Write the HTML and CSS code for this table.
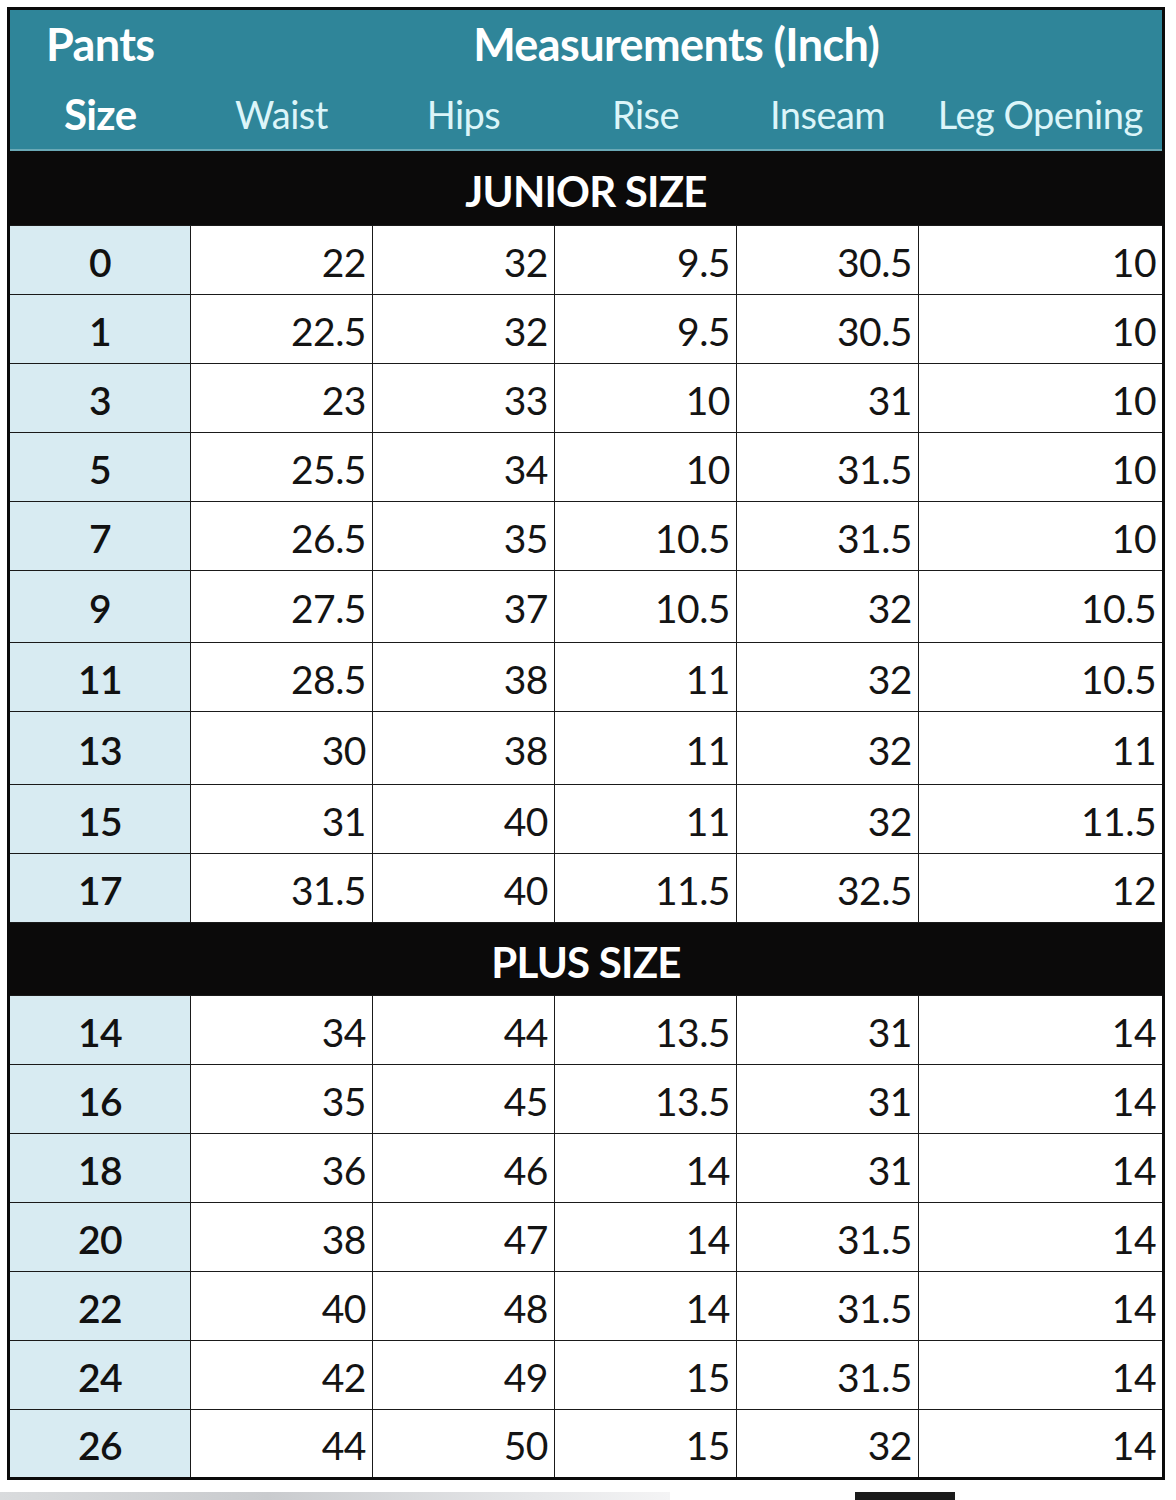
FILE: index.html
```html
<!DOCTYPE html>
<html lang="en">
<head>
<meta charset="utf-8">
<title>Pants Size Chart</title>
<link rel="stylesheet" href="styles.css">
</head>
<body>
<div class="page">
  <table class="chart">
    <colgroup>
      <col class="c-size"><col class="c-m"><col class="c-m"><col class="c-m"><col class="c-m"><col class="c-leg">
    </colgroup>
    <thead>
      <tr class="h1">
        <th class="h-main">Pants</th>
        <th class="h-main" colspan="5">Measurements (Inch)</th>
      </tr>
      <tr class="h2">
        <th class="h-main">Size</th>
        <th class="h-sub">Waist</th>
        <th class="h-sub">Hips</th>
        <th class="h-sub">Rise</th>
        <th class="h-sub">Inseam</th>
        <th class="h-sub">Leg Opening</th>
      </tr>
    </thead>
    <tbody>
      <tr class="band band-junior"><td colspan="6">JUNIOR SIZE</td></tr>
      <tr><td class="sz">0</td><td>22</td><td>32</td><td>9.5</td><td>30.5</td><td>10</td></tr>
      <tr><td class="sz">1</td><td>22.5</td><td>32</td><td>9.5</td><td>30.5</td><td>10</td></tr>
      <tr><td class="sz">3</td><td>23</td><td>33</td><td>10</td><td>31</td><td>10</td></tr>
      <tr><td class="sz">5</td><td>25.5</td><td>34</td><td>10</td><td>31.5</td><td>10</td></tr>
      <tr><td class="sz">7</td><td>26.5</td><td>35</td><td>10.5</td><td>31.5</td><td>10</td></tr>
      <tr class="tall"><td class="sz">9</td><td>27.5</td><td>37</td><td>10.5</td><td>32</td><td>10.5</td></tr>
      <tr><td class="sz">11</td><td>28.5</td><td>38</td><td>11</td><td>32</td><td>10.5</td></tr>
      <tr class="taller"><td class="sz">13</td><td>30</td><td>38</td><td>11</td><td>32</td><td>11</td></tr>
      <tr><td class="sz">15</td><td>31</td><td>40</td><td>11</td><td>32</td><td>11.5</td></tr>
      <tr><td class="sz">17</td><td>31.5</td><td>40</td><td>11.5</td><td>32.5</td><td>12</td></tr>
      <tr class="band band-plus"><td colspan="6">PLUS SIZE</td></tr>
      <tr><td class="sz">14</td><td>34</td><td>44</td><td>13.5</td><td>31</td><td>14</td></tr>
      <tr><td class="sz">16</td><td>35</td><td>45</td><td>13.5</td><td>31</td><td>14</td></tr>
      <tr><td class="sz">18</td><td>36</td><td>46</td><td>14</td><td>31</td><td>14</td></tr>
      <tr><td class="sz">20</td><td>38</td><td>47</td><td>14</td><td>31.5</td><td>14</td></tr>
      <tr><td class="sz">22</td><td>40</td><td>48</td><td>14</td><td>31.5</td><td>14</td></tr>
      <tr><td class="sz">24</td><td>42</td><td>49</td><td>15</td><td>31.5</td><td>14</td></tr>
      <tr class="last"><td class="sz">26</td><td>44</td><td>50</td><td>15</td><td>32</td><td>14</td></tr>
    </tbody>
  </table>
  <div class="photo-strip">
    <div class="strip-grey"></div>
    <div class="strip-dark"></div>
  </div>
</div>
</body>
</html>
```

FILE: styles.css
```css
html, body {
  margin: 0;
  padding: 0;
  background: #ffffff;
}

.page {
  width: 1176px;
  height: 1500px;
  overflow: hidden;
  padding: 7px 0 0 7px;
  box-sizing: border-box;
  font-family: Lato, "Liberation Sans", sans-serif;
}

.chart {
  width: 1157px;
  table-layout: fixed;
  border-collapse: collapse;
  border: 3px solid #0b0b0b;
  color: #141414;
}

.c-size { width: 182px; }
.c-m { width: 182px; }
.c-leg { width: 245px; }

.chart thead th {
  background: #2f8599;
  padding: 0;
  font-weight: 700;
  text-align: center;
  line-height: 1;
}

.h1 { height: 70px; }
.h2 { height: 71px; }

.h1 th { vertical-align: middle; padding-top: 13px; }
.h2 th { vertical-align: middle; padding-top: 7px; }

.h-main {
  color: #ffffff;
  font-size: 45px;
  letter-spacing: -0.6px;
}

.h2 .h-main {
  font-size: 42px;
}

.h-sub {
  color: #dcf5f9;
  font-weight: 400 !important;
  font-size: 38px;
  letter-spacing: -0.5px;
}

.chart thead .h2 th {
  border-bottom: 2px solid #6aa9b6;
}

.band td {
  background: #0b0a0a;
  color: #ffffff;
  font-weight: 700;
  font-size: 42px;
  text-align: center;
  letter-spacing: -0.8px;
  padding: 6px 0 0 0;
  line-height: 1;
}

.chart tbody tr { height: 69px; }
.chart tbody tr.tall { height: 72px; }
.chart tbody tr.taller { height: 73px; }
.chart tbody tr.band-junior { height: 76px; }
.chart tbody tr.band-plus { height: 73px; }

.chart tbody tr:not(.band) td {
  border: 1.5px solid #1a1a1a;
  background: #ffffff;
  font-size: 39px;
  font-weight: 400;
  text-align: right;
  padding: 4px 6px 0 0;
  line-height: 1;
  letter-spacing: -0.5px;
}

.chart tbody tr:not(.band) td.sz {
  background: #d8ebf2;
  text-align: center;
  font-weight: 600;
  padding-right: 0;
  color: #111111;
}

.photo-strip {
  display: flex;
  align-items: flex-start;
  height: 8px;
  margin-left: -7px;
  margin-top: 12px;
}

.strip-grey {
  width: 670px;
  height: 8px;
  background: linear-gradient(90deg, #d9dbdd, #c9cbce 40%, #e6e7e9 80%, #f4f4f5);
}

.strip-dark {
  width: 100px;
  height: 8px;
  margin-left: 185px;
  background: #1b1b1b;
}
```
